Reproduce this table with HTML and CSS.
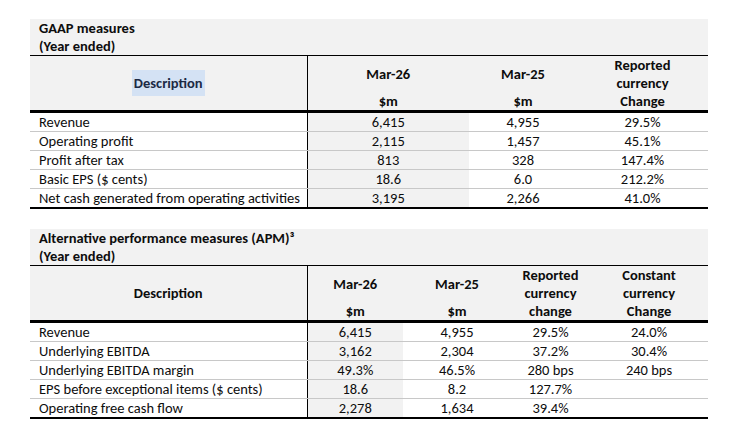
FILE: index.html
```html
<!DOCTYPE html>
<html lang="en">
<head>
    <meta charset="UTF-8">
    <meta name="viewport" content="width=device-width, initial-scale=1.0">
    <title>Key measures</title>
    <link rel="stylesheet" href="styles.css">
</head>
<body>
    <div class="block">
        <div class="title">GAAP measures<br>(Year ended)</div>
        <table class="measures">
            <colgroup>
                <col style="width: 277px">
                <col style="width: 162px">
                <col style="width: 108px">
                <col style="width: 131px">
            </colgroup>
            <thead>
                <tr>
                    <th rowspan="3" class="desc"><span class="selected">Description</span></th>
                    <th rowspan="2" class="first">Mar-26</th>
                    <th rowspan="2">Mar-25</th>
                    <th rowspan="3">Reported<br>currency<br>Change</th>
                </tr>
                <tr></tr>
                <tr>
                    <th class="first">$m</th>
                    <th>$m</th>
                </tr>
            </thead>
            <tbody>
                <tr><td class="desc">Revenue</td><td class="first">6,415</td><td>4,955</td><td>29.5%</td></tr>
                <tr><td class="desc">Operating profit</td><td class="first">2,115</td><td>1,457</td><td>45.1%</td></tr>
                <tr><td class="desc">Profit after tax</td><td class="first">813</td><td>328</td><td>147.4%</td></tr>
                <tr><td class="desc">Basic EPS ($ cents)</td><td class="first">18.6</td><td>6.0</td><td>212.2%</td></tr>
                <tr><td class="desc">Net cash generated from operating activities</td><td class="first">3,195</td><td>2,266</td><td>41.0%</td></tr>
            </tbody>
        </table>
    </div>

    <div class="block">
        <div class="title">Alternative performance measures (APM)³<br>(Year ended)</div>
        <table class="measures">
            <colgroup>
                <col style="width: 277px">
                <col style="width: 96px">
                <col style="width: 108px">
                <col style="width: 79px">
                <col style="width: 118px">
            </colgroup>
            <thead>
                <tr>
                    <th rowspan="3" class="desc">Description</th>
                    <th rowspan="2" class="first">Mar-26</th>
                    <th rowspan="2">Mar-25</th>
                    <th rowspan="3">Reported<br>currency<br>change</th>
                    <th rowspan="3">Constant<br>currency<br>Change</th>
                </tr>
                <tr></tr>
                <tr>
                    <th class="first">$m</th>
                    <th>$m</th>
                </tr>
            </thead>
            <tbody>
                <tr><td class="desc">Revenue</td><td class="first">6,415</td><td>4,955</td><td>29.5%</td><td>24.0%</td></tr>
                <tr><td class="desc">Underlying EBITDA</td><td class="first">3,162</td><td>2,304</td><td>37.2%</td><td>30.4%</td></tr>
                <tr><td class="desc">Underlying EBITDA margin</td><td class="first">49.3%</td><td>46.5%</td><td>280 bps</td><td>240 bps</td></tr>
                <tr><td class="desc">EPS before exceptional items ($ cents)</td><td class="first">18.6</td><td>8.2</td><td>127.7%</td><td></td></tr>
                <tr><td class="desc">Operating free cash flow</td><td class="first">2,278</td><td>1,634</td><td>39.4%</td><td></td></tr>
            </tbody>
        </table>
    </div>
</body>
</html>
```

FILE: styles.css
```css
body {
    margin: 0;
    padding: 19px 0 0 30px;
    background: #fff;
    color: #0d0d0d;
    font-family: Calibri, Carlito, Lato, sans-serif;
    font-size: 14.5px;
}
.block {
    width: 678px;
    margin-bottom: 20px;
}
.title {
    background: #f2f2f2;
    font-weight: bold;
    line-height: 18px;
    padding-left: 9px;
    border-bottom: 1px solid #000;
}
.measures {
    width: 678px;
    table-layout: fixed;
    border-collapse: collapse;
}
.measures th,
.measures td {
    padding: 0;
    line-height: 18px;
    text-align: center;
    white-space: nowrap;
}
.measures thead th {
    background: #f2f2f2;
    font-weight: bold;
    height: 18px;
}
.measures thead tr:last-child th {
    border-bottom: 3px solid #000;
}
.measures thead th[rowspan="3"] {
    border-bottom: 3px solid #000;
}
.measures tbody td {
    height: 18px;
    border-bottom: 1px solid #c8c8c8;
}
.measures tbody tr:last-child td {
    border-bottom: 2px solid #000;
}
.measures .desc {
    text-align: left;
    padding-left: 9px;
    border-right: 1px solid #000;
}
.measures th.desc {
    text-align: center;
    padding-left: 0;
}
.measures tbody td.first {
    background: #f2f2f2;
}
.selected {
    display: inline-block;
    padding: 4px 2px;
    background: #d4e2f4;
    color: #1c2a44;
}
```
